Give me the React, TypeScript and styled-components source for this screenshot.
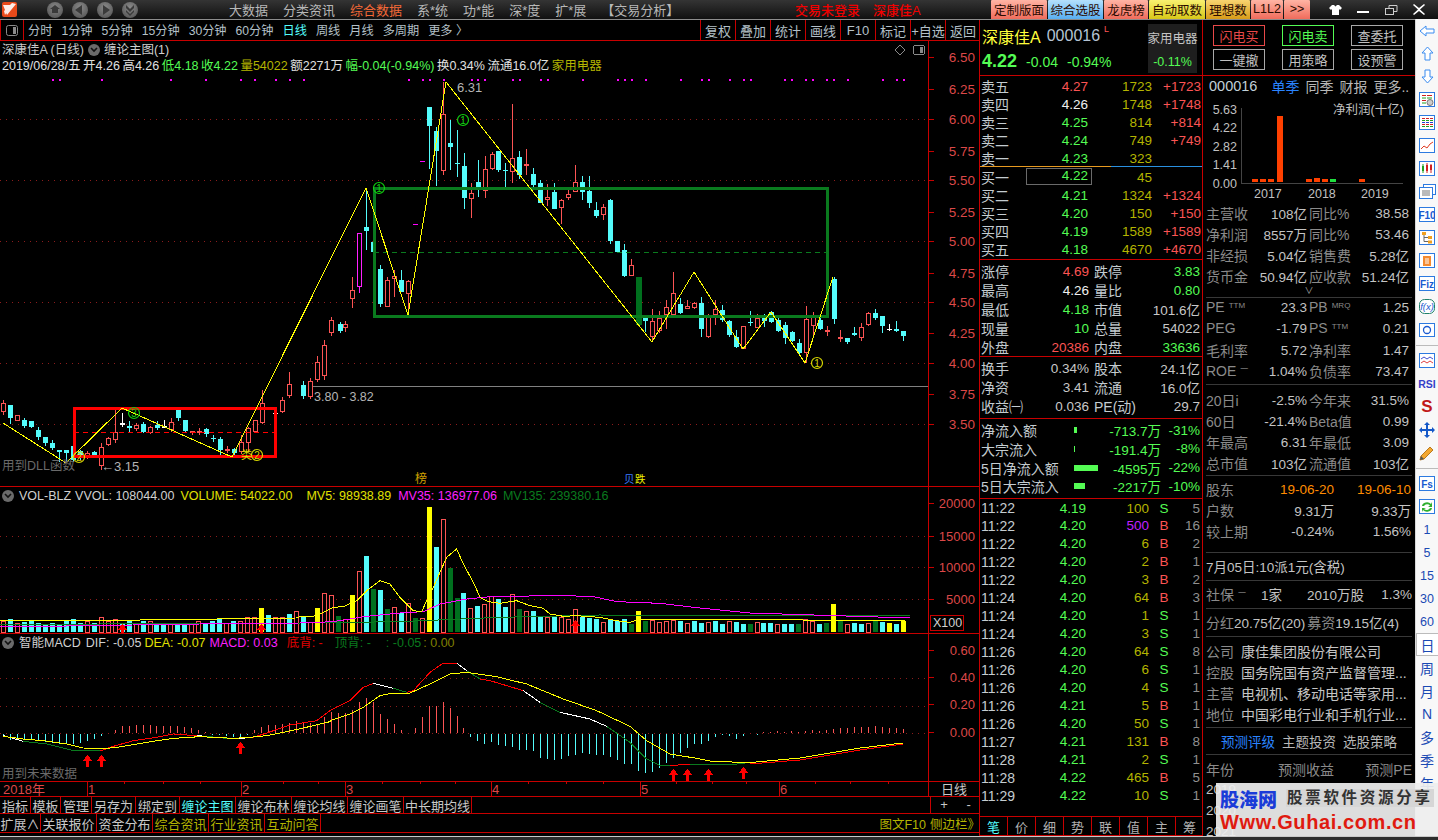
import React from "react";
import styled, { createGlobalStyle } from "styled-components";

const FONT = `"Liberation Sans", "Noto Sans CJK SC", sans-serif`;
const RED = "#c80000";
const CY = "#54fcfc";
const CR = "#fc5454";
const GR = "#54fc54";
const OL = "#b4b400";
const LG = "#c8c8c8";

const Global = createGlobalStyle`
  html, body { margin: 0; padding: 0; background: #000; }
  body { font-family: ${FONT}; font-size: 13px; color: ${LG}; }
  * { box-sizing: border-box; }
`;

const Page = styled.div`
  position: relative; width: 1438px; height: 840px; overflow: hidden;
  background: #000; display: flex; flex-direction: column;
`;

/* ---------- top bar ---------- */
const TopBar = styled.header`
  height: 20px; display: flex; align-items: center; flex: none;
  background: linear-gradient(#343434, #101010);
  border-bottom: 1px solid #8c8c8c;
`;
const Brand = styled.div`
  width: 229px; flex: none; display: flex; align-items: center; padding-left: 2px;
  svg.logo { margin-right: 30px; }
`;
const RoundBtn = styled.span`
  width: 16px; height: 16px; border-radius: 50%; margin-right: 9px;
  background: radial-gradient(circle at 50% 35%, #8a8a8a, #4c4c4c);
  display: flex; align-items: center; justify-content: center;
`;
const Menu = styled.nav`width: 566px; flex: none; display: flex; gap: 15px; font-size: 13px; color: #b8b8b8;`;
const MenuItem = styled.span<{ $active?: boolean }>`
  color: ${(p) => (p.$active ? "#f46a38" : "#b8b8b8")}; white-space: nowrap;
`;
const Status = styled.div`width: 196px; flex: none; display: flex; gap: 13px; color: #f00000; font-size: 13px; font-weight: 500;`;
const Presets = styled.div`width: 329px; flex: none; display: flex; gap: 1px; height: 19px; margin-top: -1px;`;
const Preset = styled.span<{ $w: number; $from: string; $to: string }>`
  width: ${(p) => p.$w}px; display: flex; align-items: center; justify-content: center;
  font-size: 12.5px; color: #2a0a00; white-space: nowrap;
  background: linear-gradient(${(p) => p.$from}, ${(p) => p.$to});
  border-radius: 1px 1px 0 0;
`;
const WinBtns = styled.div`flex: 1; display: flex; align-items: center; justify-content: space-around; padding: 0 6px 0 2px; height: 19px;`;

/* ---------- body columns ---------- */
const Body = styled.main`flex: none; height: 816px; display: flex;`;
const ChartCol = styled.section`width: 980px; flex: none; display: flex; flex-direction: column;`;
const Toolbar = styled.div`
  height: 21px; flex: none; display: flex; align-items: center; border-bottom: 1px solid ${RED};
  border-left: 1px solid ${RED};
`;
const ToggleCell = styled.span`
  width: 23px; height: 100%; flex: none; display: flex; align-items: center; justify-content: center;
  border-right: 1px solid ${RED};
`;
const Periods = styled.div`display: flex; gap: 9px; padding-left: 4px; font-size: 12.2px;`;
const Period = styled.span<{ $on?: boolean }>`color: ${(p) => (p.$on ? CY : "#b4c0c8")}; white-space: nowrap;`;
const ToolBtns = styled.div`margin-left: auto; display: flex; height: 100%;`;
const ToolBtn = styled.span`
  width: 35px; border-left: 1px solid ${RED}; display: flex; align-items: center; justify-content: center;
  font-size: 13px; color: #b4c0c8; white-space: nowrap; overflow: hidden;
`;

const Pane = styled.div<{ $h: number }>`
  position: relative; height: ${(p) => p.$h}px; flex: none; border-bottom: 1px solid ${RED};
  svg.canvas { display: block; }
`;
const PaneHead = styled.div`
  position: absolute; left: 2px; top: 1px; font-size: 12.5px; line-height: 16px; white-space: nowrap;
`;
const HeadLine = styled.div<{ $gap?: number }>`display: flex; align-items: center; gap: ${(p) => p.$gap ?? 4}px;`;
const H = styled.span<{ $c?: string; $ml?: number }>`
  color: ${(p) => p.$c ?? "#d0d0d0"}; margin-left: ${(p) => p.$ml ?? 0}px;
`;
const Chevron = styled.span`
  width: 12px; height: 12px; border-radius: 50%; background: #6a6a6a; flex: none; display: inline-flex;
  align-items: center; justify-content: center;
`;
const TimeRow = styled.div`height: 15px; flex: none; border-bottom: 1px solid ${RED}; position: relative; svg { display: block; }`;
const TabRow = styled.div`height: 17px; flex: none; display: flex; border-bottom: 1px solid ${RED}; position: relative;`;
const TabRow2 = styled(TabRow)`height: 19px;`;
const Tab = styled.span<{ $w: number; $c?: string }>`
  width: ${(p) => p.$w}px; flex: none; display: flex; align-items: center; justify-content: center;
  border-right: 1px solid ${RED}; color: ${(p) => p.$c ?? LG}; font-size: 13px; white-space: nowrap;
`;
const TabRight = styled.div`margin-left: auto; display: flex; align-items: center; gap: 4px; font-size: 12.5px; color: ${OL}; padding-right: 0;`;
const PlusMinus = styled.div`margin-left: auto; width: 50px; display: flex; justify-content: space-around; color: ${LG}; font-size: 13px; border-left: 1px solid ${RED};`;

/* ---------- quote panel ---------- */
const Quote = styled.section`
  width: 224px; flex: none; display: flex; flex-direction: column;
  border-left: 1px solid ${RED}; border-right: 1px solid ${RED}; margin-left: -1px;
`;
const QHead = styled.div`
  height: 56px; flex: none; border-bottom: 1px solid ${RED}; display: flex; justify-content: space-between;
  padding: 4px 5px 2px 2px;
`;
const QName = styled.div`display: flex; flex-direction: column; gap: 3px;`;
const NameLine = styled.div<{ $gap?: number }>`display: flex; align-items: center; gap: ${(p) => p.$gap ?? 6}px; white-space: nowrap;`;
const StockName = styled.span`color: #ffff3c; font-size: 16px;`;
const Code = styled.span`color: #b4c4d4; font-size: 16px;`;
const LMark = styled.span`color: ${CR}; font-size: 9px; align-self: flex-start; margin-left: -2px;`;
const BigPrice = styled.span`color: ${GR}; font-size: 18px; font-weight: bold;`;
const Chg = styled.span`color: ${GR}; font-size: 14px;`;
const Sector = styled.div`
  width: 49px; background: #1e1e1e; display: flex; flex-direction: column; align-items: center; justify-content: space-around;
  font-size: 12.5px; color: #c4c4c4; white-space: nowrap;
`;
const Book = styled.div<{ $bottom?: boolean }>`
  flex: none;
  ${(p) => (p.$bottom ? `border-bottom: 1px solid ${RED}; padding-bottom: 2px;` : "")}
`;
const BookRow = styled.div`
  height: 18px; display: grid; grid-template-columns: 38px 69px 64px 1fr; align-items: center; padding: 0 1px 4px;
  font-size: 13.5px; white-space: nowrap;
`;
const Lbl = styled.span`color: #c4ccd0; font-size: 14px; white-space: nowrap;`;
const Num = styled.span<{ $c?: string; $ml?: number }>`
  color: ${(p) => p.$c ?? LG}; text-align: right; white-space: nowrap; position: relative; margin-left: ${(p) => p.$ml ?? 0}px;
`;
const CurrentPrice = styled(Num)`
  border: 1px solid #6a6a6a; height: 17px; line-height: 14px; margin: 1px -4px 0 7px; padding-right: 3px; align-self: start;
`;
const SplitLine = styled.div`
  height: 1px; flex: none;
  background: linear-gradient(90deg, #e89a20 0, #e89a20 59%, #2a90e0 59%, #2a90e0 100%);
`;
const Stats = styled.div<{ $h: number }>`height: ${(p) => p.$h}px; flex: none; border-bottom: 1px solid ${RED}; padding-top: 1px;`;
const StatRow = styled.div`
  height: 19px; display: grid; grid-template-columns: 36px 72px 41px 1fr; align-items: center; padding: 0 2px 4px 1px;
  font-size: 13.5px; white-space: nowrap;
`;
const Lbl2 = styled(Lbl)`margin-left: 5px;`;
const FlowRow = styled.div`
  height: 18.75px; display: grid; grid-template-columns: 93px 25px 62px 1fr; align-items: center; padding: 0 2px 4px 1px;
  font-size: 13.5px; white-space: nowrap; color: ${GR};
`;
const FlowBar = styled.span`display: block; height: 6px; background: #54fc54;`;
const Trades = styled.div`flex: 1; padding-top: 1px; min-height: 0;`;
const TradeRow = styled.div`
  height: 17.98px; display: grid; grid-template-columns: 52px 53px 63px 24px 1fr; align-items: center; padding: 0 2px 2px 1px;
  font-size: 13.5px; white-space: nowrap;
`;
const QTabs = styled.div`height: 20px; flex: none; display: grid; grid-template-columns: repeat(8, 28px); border-top: 1px solid ${RED}; border-bottom: 1px solid ${RED};`;
const QTab = styled.span<{ $on?: boolean }>`
  display: flex; align-items: center; justify-content: center; font-size: 13px;
  color: ${(p) => (p.$on ? CY : "#b0b0b0")}; border-right: 1px solid ${RED};
`;

/* ---------- finance panel ---------- */
const Fin = styled.section`width: 212px; flex: none; display: flex; flex-direction: column; overflow: hidden; background: #000;`;
const TradeBtns = styled.div`
  height: 56px; flex: none; border-bottom: 1px solid ${RED}; display: grid;
  grid-template-columns: repeat(3, 52px); column-gap: 17px; row-gap: 3px; padding: 5px 0 0 10px; grid-auto-rows: 21px;
`;
const TBtn = styled.span<{ $c: string }>`
  border: 1px solid ${(p) => p.$c}; display: flex; align-items: center; justify-content: center;
  font-size: 13px; color: ${(p) => (p.$c === "#a8a8a8" ? "#c0c0c0" : p.$c)};
`;
const FinTabs = styled.div`height: 22px; flex: none; display: flex; align-items: center; padding: 0 0 2px 6px; gap: 6px; font-size: 14px; color: #b8b8b8; white-space: nowrap;`;
const FinCode = styled.span`color: #c0d0d8; font-size: 14.5px; margin-right: 8px;`;
const FinTab = styled.span<{ $on?: boolean }>`color: ${(p) => (p.$on ? "#2a84ff" : "#b8b8b8")};`;
const Section = styled.div<{ $h: number; $pt?: number; $center?: boolean }>`
  height: ${(p) => p.$h}px; flex: none; margin: 0 3px; padding-top: ${(p) => p.$pt ?? 0}px;
  border-bottom: 1px solid #383838; overflow: hidden;
  ${(p) => (p.$center ? "display:flex;align-items:center;padding-bottom:1px;" : "")}
`;
const LastSection = styled(Section)`border-bottom: none; flex: 1;`;
const FinRow = styled.div`
  height: 21px; display: grid; grid-template-columns: 42px 59px 44px 1fr; align-items: center; padding: 0 3px 3px 0;
  font-size: 13.5px; white-space: nowrap;
`;
const FLbl = styled.span`color: #8a8a8a; font-size: 14px; white-space: nowrap;`;
const FLbl2 = styled(FLbl)`margin-left: 2px;`;
const Sup = styled.span`font-size: 8px; color: #8a8a8a; vertical-align: 4px; margin-left: 4px;`;
const FVal = styled.span<{ $c?: string }>`color: ${(p) => p.$c ?? "#c4c4c4"}; text-align: right; white-space: nowrap;`;
const More = styled.div`height: 10px; text-align: center; color: #aaa; font-size: 9px; line-height: 8px;`;
const HolderRow = styled.div`
  height: 21px; display: grid; grid-template-columns: 42px 86px 77px; align-items: center; padding-bottom: 3px; font-size: 13.5px; white-space: nowrap;
`;
const Plain = styled.span`color: #c4c4c4; font-size: 13.5px; white-space: nowrap;`;
const SocialRow = styled.div`width: 100%; display: grid; grid-template-columns: 42px 34px 82px 1fr; align-items: center; font-size: 13.5px;`;
const InfoRow = styled.div`height: 21px; display: flex; gap: 7px; align-items: center; padding-bottom: 2px; white-space: nowrap;`;
const InfoVal = styled.span`color: #c4c4c4; font-size: 14px; overflow: hidden;`;
const ForecastTabs = styled.div`width: 100%; display: flex; justify-content: center; gap: 7px; font-size: 13.5px; color: #b8b8b8;`;
const ForeRow = styled.div`height: 21px; display: grid; grid-template-columns: 60px 80px 1fr; align-items: center; padding-bottom: 3px; font-size: 13.5px; white-space: nowrap; color: #c4c4c4;`;

/* ---------- icon rail ---------- */
const Rail = styled.aside`width: 23px; flex: none; background: #f8f8f8; display: flex; flex-direction: column; border-left: 1px solid #d8d8d8; margin-top: -1px;`;
const RailCell = styled.span<{ $on?: boolean; $big?: boolean }>`
  height: 23px; flex: none; display: flex; align-items: center; justify-content: center;
  color: #1a4ab4; font-size: ${(p) => (p.$big ? 14 : 12.5)}px;
  ${(p) => (p.$on ? "background:#fff;border:1px solid #bbb;border-right:none;" : "")}
`;
const RailSep = styled.span`height: 8px; flex: none; display: flex; align-items: center; &::after { content: ""; display: block; width: 100%; height: 1px; background: #bbb; }`;
const RsiMark = styled.span`color: #3440c8; font-weight: 800; font-size: 10.5px;`;
const SMark = styled.span`color: #c01818; font-weight: 900; font-size: 17px;`;

const FootBar = styled.div`flex: 1; background: #2c2c2c; border-top: 1px solid #c8c8c8;`;

/* ---------- watermark ---------- */
const Watermark = styled.div`
  position: absolute; left: 1216px; top: 783px; width: 222px; height: 53px;
  background: rgba(238,238,238,.93); padding: 2px 0 0 4px; display: flex; flex-direction: column;
`;
const WmTop = styled.div`display: flex; align-items: center; gap: 9px; height: 26px;`;
const WmBrand = styled.span`color: #1a3cd8; font-weight: 900; font-size: 19px; white-space: nowrap;`;
const WmSlogan = styled.span`
  color: #333; font-family: "Liberation Serif", "Noto Sans CJK SC", serif; font-size: 15.5px; font-weight: bold; letter-spacing: 2.7px;
  white-space: nowrap; background: #d6d6d6; padding: 0 1px; line-height: 18px;
`;
const WmUrl = styled.span`color: #e01a10; font-weight: bold; font-size: 20px; line-height: 22px; white-space: nowrap; letter-spacing: .6px;`;

/* ---------- data ---------- */
type CT = "r" | "c" | "w" | "m" | "g";
type C = [number, number, number, number, number, CT];
const CANDLES: C[] = [
  [3,400,403,412,415,"r"],[10,405,405,418,424,"c"],[17,415,415,421,421,"r"],[24,418,420,426,428,"c"],[31,421,421,427,428,"c"],
  [38,427,430,437,440,"c"],[45,437,437,443,446,"c"],[52,440,443,448,450,"c"],[59,450,450,452,462,"c"],[66,450,450,453,463,"c"],
  [73,446,446,460,462,"c"],[80,450,451,455,460,"c"],[87,451,453,456,459,"r"],[94,451,452,456,458,"c"],[101,443,447,466,470,"r"],
  [108,437,438,445,446,"r"],[115,410,432,440,443,"r"],[122,413,423,425,427,"w"],[129,421,426,428,432,"c"],[136,423,425,429,431,"r"],
  [143,422,424,432,433,"c"],[150,426,427,433,434,"r"],[157,421,425,428,430,"c"],[164,420,426,428,428,"w"],[171,418,422,430,432,"r"],
  [178,410,410,418,421,"c"],[185,420,420,431,432,"c"],[192,431,431,433,435,"r"],[199,428,431,433,435,"r"],[206,428,429,434,437,"c"],
  [213,435,438,439,442,"c"],[220,437,439,450,455,"c"],[227,446,449,451,453,"r"],[234,448,449,453,455,"c"],[241,435,442,452,454,"r"],
  [248,427,428,443,452,"r"],[255,420,420,432,433,"r"],[262,390,403,423,424,"r"],[275,408,413,414,415,"w"],[282,397,400,412,413,"r"],
  [289,372,384,396,398,"r"],[303,381,385,396,399,"c"],[310,378,381,397,399,"r"],[317,356,362,380,382,"r"],[324,340,345,376,380,"r"],
  [331,317,320,333,336,"r"],[340,322,324,331,333,"c"],[345,321,324,328,332,"r"],[352,277,290,299,308,"r"],[359,233,233,287,293,"m"],
  [366,188,227,231,250,"c"],[373,230,242,252,258,"c"],[380,265,269,304,307,"c"],[387,277,280,307,307,"r"],[394,270,276,279,297,"r"],
  [401,270,280,292,292,"c"],[408,280,281,294,315,"r"],[429,107,107,126,169,"c"],[436,127,131,151,186,"c"],[443,82,114,171,175,"r"],
  [450,120,143,147,170,"c"],[457,130,163,164,177,"c"],[464,153,166,198,209,"c"],[471,183,193,199,218,"r"],[478,160,182,189,197,"c"],
  [485,156,169,191,198,"r"],[492,152,154,169,170,"r"],[498,151,151,170,172,"c"],[505,163,170,171,187,"c"],[512,104,158,172,183,"r"],
  [519,151,157,175,179,"c"],[526,149,164,166,175,"r"],[533,168,174,185,187,"c"],[540,180,183,203,203,"c"],[547,184,197,200,206,"r"],
  [554,183,192,209,209,"c"],[561,199,200,208,224,"r"],[568,189,194,198,200,"r"],[575,165,182,192,192,"r"],[582,176,182,192,200,"c"],
  [589,176,191,203,208,"c"],[596,202,210,216,218,"c"],[603,204,207,215,220,"r"],[610,199,200,241,244,"c"],[617,241,241,252,253,"c"],
  [624,244,250,276,277,"c"],[631,259,265,276,276,"r"],[638,277,277,325,325,"g"],[645,317,318,321,332,"c"],[652,309,321,337,342,"r"],
  [659,311,318,331,333,"r"],[666,300,307,315,329,"r"],[673,272,293,315,315,"r"],[680,298,304,313,314,"c"],[687,300,306,309,309,"r"],
  [694,302,303,308,309,"r"],[701,297,303,329,337,"c"],[708,314,317,337,338,"r"],[715,300,309,315,325,"r"],[722,305,310,320,322,"c"],
  [729,320,321,335,337,"c"],[736,330,337,347,348,"c"],[743,326,326,349,349,"r"],[750,311,322,323,326,"c"],[757,314,318,328,328,"r"],
  [764,314,318,321,327,"c"],[771,311,312,322,323,"c"],[778,318,320,331,332,"c"],[785,322,325,338,344,"c"],[792,331,332,341,342,"c"],
  [799,339,343,353,354,"c"],[806,306,319,353,363,"r"],[813,312,317,326,335,"r"],[820,317,320,329,330,"c"],[827,326,330,331,336,"r"],
  [834,277,279,319,324,"c"],[840,330,337,339,342,"r"],[847,338,338,342,344,"c"],[854,327,333,335,336,"c"],[861,323,327,338,341,"r"],
  [868,312,313,325,326,"r"],[875,309,313,318,320,"c"],[882,316,316,326,333,"c"],[889,324,329,330,331,"w"],[896,321,329,331,332,"c"],[903,331,331,336,341,"c"],
];
const MAGENTA_DOTS = [52,59,101,170,205,240,254,275,289,303,408,422,429,443,471,477,484,512,519,540,547,582,617,624,631,645,680,701,708,729,743,750,784,791,805,812,826,833,847,882,896,903];

const VOL = ("r622 c620 r624 c623 c622 c624 c625 c624 c625 c622 c620 c624 r622 c624 r618 r622 r620 c624 c622 r624 c622 r622 c624 c625 r625 c625 c624 r624 r622 c624 c622 c620 r624 c622 r622 r618 r618 y609 c616 r618 r618 c615 r612 " +
  "c618 r623 y609 r594 r596 g617 r620 y596 r572 c557 g590 c591 g610 r608 c614 r604 g619 r619 y508 c548 r520 g569 g599 c594 r609 c607 r605 r597 c600 c608 r595 g610 r612 c612 c618 r618 c618 r618 r620 r610 c618 c619 c620 r623 c620 c622 c620 g625 y612 g622 r621 r623 " +
  "r622 r621 c622 r624 c622 c624 r623 c622 c625 r622 c623 c625 g625 r623 c624 c624 r625 c625 c625 g625 r620 r622 c625 g624 y605 g622 r625 c624 c625 r624 g622 c623 y624 c625 y622").split(" ");
const MACD = [-3,-6,-6,-6,-6,-7,-8,-9,-10,-10,-10,-9,-7,-5,-2,0,3,7,7,8,8,8,7,7,7,7,6,5,3,1,-1,-1,-2,-3,-3,-1,3,6,8,8,9,10,12,11,10,9,16,
  21,20,20,23,31,35,31,19,14,9,3,0,5,16,27,27,31,25,17,5,
  -3,-7,-10,-8,-11,-12,-13,-16,-16,-17,-24,-25,-26,-25,-22,-21,-19,-20,-21,-21,-23,-26,-30,-30,-37,-39,-38,-34,-29,-24,-19,-14,-10,-10,-7,-3,-1,-2,-5,-2,
  0,-1,1,1,2,1,2,1,2,3,2,3,4,5,5,6,6,6,7,6,5,5,4];
const xi = (i: number) => Math.round(3 + i * 6.977);
const zoomPts = (ox: number, oy: number, pts: number[][]) => pts.map(([x, y]) => `${ox + x / 3},${oy + y / 3}`).join(" ");

const MV5 = zoomPts(300, 490, [[0,383],[40,382],[60,375],[100,355],[130,353],[170,335],[200,305],[240,275],[270,285],[300,325],[340,365],[365,368],[380,335],[400,295],[440,205],[470,180],[490,225],[520,280],[540,325],[565,338],[600,343],[650,335],[690,350],[730,358],[750,375],[790,382],[830,380],[900,385],[950,395],[990,400],[1010,393],[1080,390]]);
const MV35 = zoomPts(300, 490, [[0,402],[100,398],[200,382],[300,372],[370,368],[420,345],[500,330],[580,322],[800,320],[880,323],[950,338],[1080,343]]);
const MV135 = zoomPts(300, 490, [[0,402],[300,398],[600,385],[900,378],[1080,380]]);

const DEA_LINE = [
  zoomPts(0, 630, [[10,322],[70,330],[130,335],[200,345],[250,357],[300,360],[350,355],[440,340],[520,328],[600,323],[700,328],[750,325],[800,320],[850,310],[910,297],[990,278]]),
  zoomPts(330, 640, [[0,245],[60,225],[100,205],[150,170],[190,162],[240,162],[300,135],[360,105],[410,100],[500,113],[590,135],[700,180],[800,215],[900,262],[950,305],[1020,345],[1100,358],[1150,368],[1260,370]]),
  "750,763.5 800,759 860,749 903,744",
].join(" ");
const DIF_SEGS: [string, string][] = [
  ["#fff", zoomPts(0,630,[[10,320],[70,337]])],
  ["#0a7a1e", zoomPts(0,630,[[70,337],[140,345],[220,365],[300,366]])],
  ["#f00", zoomPts(0,630,[[300,366],[340,352],[400,335],[470,325],[520,315],[590,320]])],
  ["#fff", zoomPts(0,630,[[590,320],[620,322]])],
  ["#0a7a1e", zoomPts(0,630,[[620,322],[700,330]])],
  ["#fff", zoomPts(0,630,[[700,330],[760,325]])],
  ["#f00", `${760/3},${630+325/3} ${800/3},${630+312/3} ${870/3},${630+288/3} ${950/3},${630+275/3} 330,${630+245/3} ` + zoomPts(330,640,[[0,215],[60,185],[100,145],[130,133]])],
  ["#fff", zoomPts(330,640,[[130,133],[190,148]])],
  ["#0a7a1e", zoomPts(330,640,[[190,148],[230,160]])],
  ["#f00", zoomPts(330,640,[[230,160],[250,155],[300,100],[340,72],[380,72]])],
  ["#fff", zoomPts(330,640,[[380,72],[410,95]])],
  ["#0a7a1e", zoomPts(330,640,[[410,95],[450,120]])],
  ["#f00", zoomPts(330,640,[[450,120],[480,125],[580,155]])],
  ["#fff", zoomPts(330,640,[[580,155],[630,190]])],
  ["#0a7a1e", zoomPts(330,640,[[630,190],[690,220]])],
  ["#fff", zoomPts(330,640,[[690,220],[780,240],[830,262]])],
  ["#0a7a1e", zoomPts(330,640,[[830,262],[900,310],[950,360],[990,380],[1020,380]])],
  ["#f00", zoomPts(330,640,[[1020,380],[1080,375]])],
  ["#0a7a1e", zoomPts(330,640,[[1080,375],[1140,375],[1220,375],[1260,370]])],
  ["#f00", "750,765 800,761 860,751 903,745"],
];

const Axis = ({ ticks, small }: { ticks: [string, number][]; small?: boolean }) => (
  <>
    <rect x={928} y={0} width={1} height={840} fill={RED} />
    {ticks.map(([t, y]) => (
      <g key={t}>
        <rect x={929} y={y} width={5} height={1} fill={RED} />
        <text x={975} y={y + 5} textAnchor="end" fontSize={small ? 13 : 13.5} fill="#dc4848">{t}</text>
      </g>
    ))}
  </>
);
const Dotted = ({ ys }: { ys: number[] }) => (
  <>{ys.map((y) => <line key={y} x1={0} x2={928} y1={y + .5} y2={y + .5} stroke="#8c1c1c" strokeDasharray="1 5" />)}</>
);
const Mark = ({ x, y, n, c }: { x: number; y: number; n: string; c: string }) => (
  <g shapeRendering="auto">
    <circle cx={x} cy={y} r={5.5} fill="none" stroke={c} strokeWidth={1.2} />
    <text x={x} y={y + 3.5} textAnchor="middle" fontSize={10} fill={c}>{n}</text>
  </g>
);
const UpArrow = ({ x, y }: { x: number; y: number }) => (
  <path d={`M${x + .5} ${y}L${x + 5.5} ${y + 6}H${x + 2}V${y + 12}H${x - 1}V${y + 6}H${x - 4.5}Z`} fill="#ff0000" />
);
const Candle = ({ c }: { c: C }) => {
  const [x, hi, top, bot, lo, t] = c;
  const col = t === "r" ? CR : t === "c" ? CY : t === "m" ? "#ff20ff" : t === "w" ? "#fff" : "#00701e";
  if (t === "g") return <rect x={x - 2} y={top} width={6} height={bot - top} fill={col} />;
  const hollow = t === "r" || t === "m";
  return (
    <g>
      {hi < top && <rect x={x} y={hi} width={1} height={top - hi} fill={col} />}
      {lo > bot && <rect x={x} y={bot} width={1} height={lo - bot} fill={col} />}
      {hollow
        ? <rect x={x - 1.5} y={top + .5} width={4} height={Math.max(1, bot - top - 1)} fill="#000" stroke={col} />
        : <rect x={x - 2} y={top} width={5} height={Math.max(1, bot - top)} fill={col} />}
    </g>
  );
};

const ChevronIcon = () => (
  <svg width="8" height="6" viewBox="0 0 8 6"><path d="M1 1l3 3 3-3" fill="none" stroke="#111" strokeWidth="1.6" /></svg>
);

const Toggle = ({ color = "#8a8a8a" }: { color?: string }) => (
  <svg width="12" height="11" viewBox="0 0 12 11"><rect x=".5" y=".5" width="11" height="10" rx="2" fill="none" stroke={color} /><rect x="7" y="2" width="3" height="7" fill={color} /></svg>
);

const MainChart = () => (
  <svg className="canvas" width={980} height={445} viewBox="0 41 980 445" shapeRendering="crispEdges" fontFamily={FONT}>
    <Dotted ys={[119, 180, 241, 302, 363, 424]} />
    <Axis ticks={[["6.50",57],["6.25",89],["6.00",119],["5.75",151],["5.50",180],["5.25",212],["5.00",241],["4.75",273],["4.50",302],["4.25",333],["4.00",363],["3.75",394],["3.50",424]]} />
    <rect x={310} y={386} width={618} height={1} fill="#808080" />
    {MAGENTA_DOTS.map((x) => <rect key={x} x={x} y={79} width={2} height={2} fill="#ff00ff" />)}
    <rect x={420} y={161} width={5} height={1} fill="#ff00ff" />
    <rect x={413} y={224} width={5} height={1} fill="#ff00ff" />
    {CANDLES.map((c) => <Candle key={c[0]} c={c} />)}
    <line x1={74} x2={275} y1={432.5} y2={432.5} stroke="#f00" strokeDasharray="5 4" />
    <rect x={74} y={408.5} width={201} height={48} fill="none" stroke="#f00" strokeWidth={3} />
    <line x1={374} x2={827} y1={252.5} y2={252.5} stroke="#0a7a1e" strokeDasharray="5 4" />
    <rect x={374} y={188} width={453} height={128} fill="none" stroke="#0a7a1e" strokeWidth={3} />
    <polyline fill="none" stroke="#ffff00" points="3,423 66,463 122,408 232,457 366,188 408,315 446,82 652,342 694,272 743,349 771,312 805,363 833,277" />
    <Mark x={379} y={188} n="1" c="#10d010" />
    <Mark x={463} y={120} n="1" c="#10d010" />
    <Mark x={134} y={413} n="3" c="#10d010" />
    <Mark x={817} y={363} n="1" c="#d8d800" />
    <Mark x={257} y={455} n="2" c="#d8d800" />
    <Mark x={79} y={457} n="2" c="#d8d800" />
    <g shapeRendering="auto">
      <text x={241} y={459} fontSize={11} fill="#e0e000">类</text>
      <text x={457} y={92} fontSize={13} fill="#b4b4b4">6.31</text>
      <text x={101} y={471} fontSize={13} fill="#b4b4b4">←3.15</text>
      <text x={314} y={401} fontSize={12.5} fill="#b4b4b4">3.80 - 3.82</text>
      <text x={2} y={470} fontSize={12.5} fill="#6a6a6a">用到DLL函数</text>
      <text x={415} y={483} fontSize={12} fill="#d0a000">榜</text>
      <text x={624} y={483} fontSize={10.5} fill="#3a7cff">贝</text>
      <text x={635} y={483} fontSize={10.5} fill="#f0f000">跌</text>
    </g>
    <path d="M900 45l5 5-5 5-5-5z" fill="none" stroke="#8a8a8a" />
    <g transform="translate(913 45)"><rect x=".5" y=".5" width="11" height="9" rx="2" fill="none" stroke="#8a8a8a" /><rect x="7" y="2" width="3" height="6" fill="#8a8a8a" /></g>
  </svg>
);

const VolChart = () => (
  <svg className="canvas" width={980} height={146} viewBox="0 488 980 146" shapeRendering="crispEdges" fontFamily={FONT}>
    <Dotted ys={[537, 568, 600]} />
    <Axis ticks={[["20000",504],["15000",537],["10000",568],["5000",600]]} small />
    {VOL.map((v, i) => {
      const t = v[0]; const top = +v.slice(1); const x = xi(i); const h = 633 - top;
      if (t === "r") return <rect key={i} x={x - 1.5} y={top + .5} width={4} height={h} fill="#000" stroke={CR} />;
      return <rect key={i} x={x - 2} y={top} width={5} height={h} fill={t === "c" ? CY : t === "y" ? "#ffff00" : "#00701e"} />;
    })}
    <polyline fill="none" stroke="#0a7a1e" points={`0,626 100,625 ${MV135} 910,617`} />
    <polyline fill="none" stroke="#ff00ff" points={`0,628 200,625 ${MV35} 700,609 750,614 910,619`} />
    <polyline fill="none" stroke="#ffff00" points={`0,622 140,621 296,619 ${MV5} 700,620 905,622`} />
    <UpArrow x={575} y={621} />
    <UpArrow x={122} y={625} />
    <UpArrow x={261} y={625} />
    <rect x={930.5} y={616.5} width={33} height={15} fill="#000" stroke={RED} />
    <text x={933} y={628} fontSize={12.5} fill="#d0d0d0" shapeRendering="auto">X100</text>
  </svg>
);

const MacdChart = () => (
  <svg className="canvas" width={980} height={147} viewBox="0 635 980 147" shapeRendering="crispEdges" fontFamily={FONT}>
    <Dotted ys={[679, 707, 734]} />
    <Axis ticks={[["0.60",651],["0.40",678],["0.20",705],["0.00",733]]} small />
    {MACD.map((h, i) => (
      <rect key={i} x={xi(i)} y={h > 0 ? 734 - h : 735} width={1} height={Math.abs(h)} fill={h > 0 ? CR : CY} />
    ))}
    {DIF_SEGS.map(([c, p], i) => <polyline key={i} fill="none" stroke={c} points={p} />)}
    <polyline fill="none" stroke="#ffff00" points={DEA_LINE} />
    {[[87,756],[101,756],[240,743],[673,770],[687,770],[708,770],[743,768]].map(([x, y]) => <UpArrow key={x} x={x} y={y} />)}
    <text x={2} y={779} fontSize={12.5} fill="#6a6a6a" shapeRendering="auto">用到未来数据</text>
  </svg>
);

const TimeAxis = () => (
  <svg width={980} height={14} viewBox="0 784 980 14" shapeRendering="crispEdges" fontFamily={FONT}>
    {[87,241,345,491,640,779].map((x) => <rect key={x} x={x} y={784} width={1} height={14} fill={RED} />)}
    {[124,163,200,283,318,382,420,455,528,566,603,676,712,746,815,850,888].map((x) => <rect key={x} x={x} y={784} width={1} height={2} fill={RED} />)}
    <rect x={928} y={784} width={1} height={14} fill={RED} />
    <g shapeRendering="auto" fontSize={13} fill="#dc4848">
      <text x={3} y={796}>2018年</text>
      <text x={88} y={796}>1</text><text x={242} y={796}>2</text><text x={346} y={796}>3</text>
      <text x={492} y={796}>4</text><text x={641} y={796}>5</text><text x={780} y={796}>6</text>
      <text x={941} y={796} fill="#c8c8c8">日线</text>
    </g>
  </svg>
);

const BOOK_SELL = [["卖五","4.27",CR,"1723","+1723"],["卖四","4.26","#f0f0f0","1748","+1748"],["卖三","4.25",GR,"814","+814"],["卖二","4.24",GR,"749","+749"],["卖一","4.23",GR,"323",""]];
const BOOK_BUY = [["买一","4.22",GR,"45",""],["买二","4.21",GR,"1324","+1324"],["买三","4.20",GR,"150","+150"],["买四","4.19",GR,"1589","+1589"],["买五","4.18",GR,"4670","+4670"]];
const TRADES: [string,string,string,string,string][] = [
  ["11:22","4.19","100","S","5"],["11:22","4.20","500","B","16"],["11:22","4.20","6","B","2"],["11:22","4.20","2","B","1"],["11:22","4.20","3","B","2"],
  ["11:24","4.20","64","B","3"],["11:24","4.20","1","S","1"],["11:24","4.20","3","S","1"],["11:26","4.20","64","S","8"],["11:26","4.20","6","S","1"],
  ["11:26","4.20","4","S","1"],["11:26","4.21","5","B","1"],["11:26","4.20","50","S","1"],["11:27","4.21","131","B","8"],["11:28","4.21","2","S","1"],
  ["11:28","4.22","465","B","5"],["11:29","4.22","10","S","1"],
];

const Frame = ({ children, w = 16, h = 15 }: { children: React.ReactNode; w?: number; h?: number }) => (
  <svg width={w} height={h} viewBox={`0 0 ${w} ${h}`} fontFamily={FONT}>
    <rect x=".5" y=".5" width={w - 1} height={h - 1} fill="#fff" stroke="#2c7ae0" />
    {children}
  </svg>
);
const RailIcons: React.ReactNode[] = [
  <svg width="16" height="12" viewBox="0 0 16 12"><path d="M1 6l6-5v3h8v4H7v3z" fill="#fff" stroke="#3a8cf0" /></svg>,
  <svg width="13" height="15" viewBox="0 0 13 15"><path d="M6.5 1l5.5 6H9v7H4V7H1z" fill="#fff" stroke="#3a8cf0" /></svg>,
  <svg width="13" height="15" viewBox="0 0 13 15"><path d="M6.5 14l5.5-6H9V1H4v7H1z" fill="#fff" stroke="#3a8cf0" /></svg>,
  <Frame><path d="M3 3.5h4M8 3.5h5" stroke="#d02020" /><path d="M3 6h4M8 6h5" stroke="#20a020" /><path d="M3 8.5h4" stroke="#d02020" /><path d="M3 11h4" stroke="#20a020" /><circle cx="11" cy="10.5" r="3" fill="#ccc" stroke="#777" /></Frame>,
  <Frame><path d="M3 3.5h3M7 3.5h3M11 3.5h3" stroke="#d02020" /><path d="M3 5.5h3M7 5.5h3M11 5.5h3" stroke="#20a020" /><path d="M3 7.5h3M7 7.5h3M11 7.5h3" stroke="#2040d0" /><path d="M3 9.5h3M7 9.5h3M11 9.5h3" stroke="#d02020" /><path d="M3 11.5h3M7 11.5h3M11 11.5h3" stroke="#20a020" /></Frame>,
  <Frame><path d="M2 11l3-3 3 2 3-4 3-2" fill="none" stroke="#e03a20" /></Frame>,
  <Frame><path d="M4 3v9" stroke="#20a020" /><rect x="3" y="5" width="2" height="5" fill="#20a020" /><path d="M8 2v10" stroke="#d02020" /><rect x="7" y="4" width="2" height="6" fill="#d02020" /><path d="M12 3v9" stroke="#d02020" /><rect x="11" y="4" width="2" height="5" fill="#d02020" /></Frame>,
  <svg width="17" height="15" viewBox="0 0 17 15"><rect x="4.5" y=".5" width="12" height="10" fill="#fff" stroke="#2c7ae0" /><rect x=".5" y="3.5" width="13" height="11" fill="#fff" stroke="#2c7ae0" /><path d="M3 7h8M3 9h8M3 11h8" stroke="#777" /></svg>,
  <Frame><text x="8" y="11.5" textAnchor="middle" fontSize="10" fill="#1a5ad0" fontWeight="bold">F10</text></Frame>,
  <Frame><rect x="3" y="2" width="4" height="3" fill="#f0a020" /><rect x="9" y="6" width="4" height="3" fill="#f0a020" /><rect x="9" y="10.5" width="4" height="3" fill="#f0a020" /><path d="M5 5v6.5h4M5 7.5h4" fill="none" stroke="#666" /></Frame>,
  <Frame><path d="M4 3h8v10H4z" fill="#f48a30" /><path d="M6 6h4M6 8h4M6 10h4" stroke="#fff" /></Frame>,
  <Frame><text x="8" y="11.5" textAnchor="middle" fontSize="10" fill="#1a5ad0" fontWeight="bold">Fiz</text></Frame>,
  <svg width="16" height="15" viewBox="0 0 16 15" fontFamily={FONT}><rect x=".5" y=".5" width="15" height="14" rx="5" fill="#fff" stroke="#20806a" /><text x="8" y="11" textAnchor="middle" fontSize="9.5" fontStyle="italic" fill="#1a5ad0">f(x)</text></svg>,
  <Frame w={16} h={14}><circle cx="8" cy="7" r="3.5" fill="none" stroke="#1a5ad0" strokeWidth="1.3" /></Frame>,
];
const RailIcons2: React.ReactNode[] = [
  <Frame><path d="M2 6l3-2 3 2 3-2 3 2" fill="none" stroke="#4050d0" /><path d="M2 10l3-2 3 2 3-2 3 2" fill="none" stroke="#e04040" /></Frame>,
  <RsiMark>RSI</RsiMark>,
  <SMark>S</SMark>,
  <svg width="16" height="16" viewBox="0 0 16 16"><path d="M8 0l3 3H9v4h4V5l3 3-3 3V9H9v4h2l-3 3-3-3h2V9H3v2L0 8l3-3v2h4V3H5z" fill="#1458c8" /></svg>,
  <svg width="16" height="16" viewBox="0 0 16 16"><path d="M2 11L11 2l3 3-9 9-4 1z" fill="#f4a830" stroke="#b87a20" /><path d="M1 15l1-4 3 3z" fill="#555" /></svg>,
];
const RailIcons3: React.ReactNode[] = [
  <Frame><text x="8" y="11.5" textAnchor="middle" fontSize="10" fill="#1a5ad0" fontWeight="bold">Fs</text></Frame>,
  <Frame><path d="M3 7a5 4 0 0 1 9-2l1-2v5H9l2-1.5A3.5 3 0 0 0 5 7z" fill="#30b030" /><path d="M13 9a5 4 0 0 1-9 2l-1 2V9h4l-2 1a3.500 3 0 0 0 6-1z" fill="#30b030" /></Frame>,
  "1","5","15","30","60",
];
const RailLetters = ["周","月","N","多","季","年"];

export default function App() {
  return (
    <Page>
      <Global />
      <TopBar>
        <Brand>
          <svg className="logo" width="15" height="15" viewBox="0 0 15 15"><rect width="15" height="15" rx="2" fill="#e84a1a" /><path d="M1 3h8L3 13l-1-4 8-8 4 1-9 11" fill="#fff" opacity=".9" /></svg>
          {["M8 3l5 4h-2v4H5V7H3z","M10 3v10L3 8z","M6 3v10l7-5z","M4 3l4 4 4-4v3l-4 4-4-4zM4 8l4 4 4-4v2l-4 4-4-4z"].map((d) => (
            <RoundBtn key={d}><svg width="16" height="16" viewBox="0 0 16 16"><path d={d} fill="#3a3a3a" /></svg></RoundBtn>
          ))}
        </Brand>
        <Menu>
          {["大数据","分类资讯","综合数据","系*统","功*能","深*度","扩*展","【交易分析】"].map((m) => <MenuItem key={m} $active={m === "综合数据"}>{m}</MenuItem>)}
        </Menu>
        <Status><span>交易未登录</span><span>深康佳A</span></Status>
        <Presets>
          <Preset $w={56} $from="#ffb4a4" $to="#f06c5c">定制版面</Preset>
          <Preset $w={55} $from="#b4e0fc" $to="#58aef0">综合选股</Preset>
          <Preset $w={44} $from="#ffb4a4" $to="#f06c5c">龙虎榜</Preset>
          <Preset $w={56} $from="#f8f070" $to="#d8c818">自动取数</Preset>
          <Preset $w={44} $from="#f8d470" $to="#d89c18">理想数</Preset>
          <Preset $w={32} $from="#ffb4a4" $to="#f06c5c">L1L2</Preset>
          <Preset $w={26} $from="#ffb4a4" $to="#f06c5c">&gt;&gt;</Preset>
        </Presets>
        <WinBtns>
          <svg width="13" height="10" viewBox="0 0 13 10"><path d="M3 0h2l1.500 1.500L8 0h2l3 3-2 2-1-1v6H3V4L2 5 0 3z" fill="#fff" /></svg>
          <svg width="13" height="10" viewBox="0 0 13 10"><rect y="6" width="12" height="2" fill="#fff" /></svg>
          <svg width="13" height="10" viewBox="0 0 13 10" fill="none" stroke="#ccc"><rect x=".5" y="3.500" width="8" height="6" /><path d="M4 3V.5h8v6H9" /></svg>
          <svg width="12" height="11" viewBox="0 0 12 11"><path d="M1 0l5 4 5-4 1 1-5 4.500 5 4.500-1 1-5-4-5 4-1-1 5-4.500L0 1z" fill="#fff" /></svg>
        </WinBtns>
      </TopBar>
      <Body>
        <ChartCol>
          <Toolbar>
            <ToggleCell><Toggle /></ToggleCell>
            <Periods>
              {["分时","1分钟","5分钟","15分钟","30分钟","60分钟"].map((p) => <Period key={p}>{p}</Period>)}
              <Period $on>日线</Period>
              {["周线","月线","多周期","更多 〉"].map((p) => <Period key={p}>{p}</Period>)}
            </Periods>
            <ToolBtns>
              {["复权","叠加","统计","画线","F10","标记","+自选","返回"].map((b) => <ToolBtn key={b}>{b}</ToolBtn>)}
            </ToolBtns>
          </Toolbar>
          <Pane $h={446}>
            <MainChart />
            <PaneHead>
              <HeadLine>
                <H $c="#c8c8c8">深康佳A (日线)</H><Chevron><ChevronIcon /></Chevron><H>缠论主图(1)</H>
              </HeadLine>
              <HeadLine $gap={2.5}>
                <H $c="#e0e0e0">2019/06/28/五</H><H $c="#e0e0e0">开4.26</H><H $c="#e0e0e0">高4.26</H><H $c={GR}>低4.18</H><H $c={GR}>收4.22</H>
                <H $c={OL}>量54022</H><H $c="#e0e0e0">额2271万</H><H $c={GR}>幅-0.04(-0.94%)</H><H $c="#e0e0e0">换0.34%</H><H $c="#e0e0e0">流通16.0亿</H><H $c={OL}>家用电器</H>
              </HeadLine>
            </PaneHead>
          </Pane>
          <Pane $h={147}>
            <VolChart />
            <PaneHead>
              <HeadLine $gap={5}>
                <Chevron><ChevronIcon /></Chevron>
                <H>VOL-BLZ</H><H $ml={-1}>VVOL: 108044.00</H>
                <H $c="#e0e000" $ml={1}>VOLUME: 54022.00</H><H $c="#e0e000" $ml={9}>MV5: 98938.89</H>
                <H $c="#ff20ff" $ml={2}>MV35: 136977.06</H><H $c="#0a7a1e" $ml={1}>MV135: 239380.16</H>
              </HeadLine>
            </PaneHead>
          </Pane>
          <Pane $h={148}>
            <MacdChart />
            <PaneHead>
              <HeadLine $gap={5}>
                <Chevron><ChevronIcon /></Chevron>
                <H>智能MACD</H><H>DIF: -0.05</H><H $c="#e0e000" $ml={-2}>DEA: -0.07</H><H $c="#ff20ff" $ml={-1}>MACD: 0.03</H>
                <H $c="#e00000" $ml={4}>底背: -</H><H $c="#0a7a1e" $ml={7}>顶背: -</H><H $c="#0a7a1e" $ml={10}>: -0.05</H><H $c="#808000" $ml={-3}>: 0.00</H>
              </HeadLine>
            </PaneHead>
          </Pane>
          <TimeRow><TimeAxis /></TimeRow>
          <TabRow>
            <Tab $w={31}>指标</Tab><Tab $w={30}>模板</Tab><Tab $w={31}>管理</Tab><Tab $w={44}>另存为</Tab><Tab $w={44}>绑定到</Tab>
            <Tab $w={56} $c={CY}>缠论主图</Tab><Tab $w={56}>缠论布林</Tab><Tab $w={56}>缠论均线</Tab><Tab $w={56}>缠论画笔</Tab><Tab $w={68}>中长期均线</Tab>
            <PlusMinus><span>+</span><span>-</span></PlusMinus>
          </TabRow>
          <TabRow2>
            <Tab $w={41}>扩展∧</Tab><Tab $w={56}>关联报价</Tab><Tab $w={56}>资金分布</Tab>
            <Tab $w={56} $c={OL}>综合资讯</Tab><Tab $w={56} $c={OL}>行业资讯</Tab><Tab $w={56} $c={OL}>互动问答</Tab>
            <TabRight><span>图文F10</span><span>侧边栏》</span></TabRight>
          </TabRow2>
        </ChartCol>

        <Quote>
          <QHead>
            <QName>
              <NameLine><StockName>深康佳A</StockName><Code>000016</Code><LMark>L</LMark></NameLine>
              <NameLine $gap={9}><BigPrice>4.22</BigPrice><Chg>-0.04</Chg><Chg>-0.94%</Chg></NameLine>
            </QName>
            <Sector><span>家用电器</span><span style={{ color: GR }}>-0.11%</span></Sector>
          </QHead>
          <Book>
            {BOOK_SELL.map(([l, p, c, v, d]) => (
              <BookRow key={l}><Lbl>{l}</Lbl><Num $c={c}>{p}</Num><Num $c={OL}>{v}</Num><Num $c={CR}>{d}</Num></BookRow>
            ))}
          </Book>
          <SplitLine />
          <Book $bottom>
            {BOOK_BUY.map(([l, p, c, v, d], i) => (
              <BookRow key={l}><Lbl>{l}</Lbl>{i === 0 ? <CurrentPrice $c={c}>{p}</CurrentPrice> : <Num $c={c}>{p}</Num>}<Num $c={OL}>{v}</Num><Num $c={CR}>{d}</Num></BookRow>
            ))}
          </Book>
          <Stats $h={97}>
            <StatRow><Lbl>涨停</Lbl><Num $c={CR}>4.69</Num><Lbl2>跌停</Lbl2><Num $c={GR}>3.83</Num></StatRow>
            <StatRow><Lbl>最高</Lbl><Num $c="#f0f0f0">4.26</Num><Lbl2>量比</Lbl2><Num $c={GR}>0.80</Num></StatRow>
            <StatRow><Lbl>最低</Lbl><Num $c={GR}>4.18</Num><Lbl2>市值</Lbl2><Num>101.6亿</Num></StatRow>
            <StatRow><Lbl>现量</Lbl><Num $c={GR}>10</Num><Lbl2>总量</Lbl2><Num>54022</Num></StatRow>
            <StatRow><Lbl>外盘</Lbl><Num $c={CR}>20386</Num><Lbl2>内盘</Lbl2><Num $c={GR}>33636</Num></StatRow>
          </Stats>
          <Stats $h={62}>
            <StatRow><Lbl>换手</Lbl><Num>0.34%</Num><Lbl2>股本</Lbl2><Num>24.1亿</Num></StatRow>
            <StatRow><Lbl>净资</Lbl><Num>3.41</Num><Lbl2>流通</Lbl2><Num>16.0亿</Num></StatRow>
            <StatRow><Lbl>收益㈠</Lbl><Num>0.036</Num><Lbl2>PE(动)</Lbl2><Num>29.7</Num></StatRow>
          </Stats>
          <Stats $h={80}>
            <FlowRow><Lbl>净流入额</Lbl><FlowBar style={{ width: 3 }} /><Num $c={GR}>-713.7万</Num><Num $c={GR}>-31%</Num></FlowRow>
            <FlowRow><Lbl>大宗流入</Lbl><FlowBar style={{ width: 1 }} /><Num $c={GR}>-191.4万</Num><Num $c={GR}>-8%</Num></FlowRow>
            <FlowRow><Lbl>5日净流入额</Lbl><FlowBar style={{ width: 24 }} /><Num $c={GR}>-4595万</Num><Num $c={GR}>-22%</Num></FlowRow>
            <FlowRow><Lbl>5日大宗流入</Lbl><FlowBar style={{ width: 11 }} /><Num $c={GR}>-2217万</Num><Num $c={GR}>-10%</Num></FlowRow>
          </Stats>
          <Trades>
            {TRADES.map(([t, p, v, s, n], i) => (
              <TradeRow key={i}>
                <Lbl>{t}</Lbl>
                <Num $c={GR}>{p}</Num>
                <Num $c={v === "500" ? "#c020ff" : OL}>{v}</Num>
                <Num $c={s === "S" ? GR : CR} style={{ textAlign: "center", paddingLeft: 6 }}>{s}</Num>
                <Num $c="#909090">{n}</Num>
              </TradeRow>
            ))}
          </Trades>
          <QTabs>
            {["笔","价","细","势","联","值","主","筹"].map((t, i) => <QTab key={t} $on={i === 0}>{t}</QTab>)}
          </QTabs>
        </Quote>

        <Fin>
          <TradeBtns>
            <TBtn $c="#e84848">闪电买</TBtn><TBtn $c="#54fc54">闪电卖</TBtn><TBtn $c="#a8a8a8">查委托</TBtn>
            <TBtn $c="#a8a8a8">一键撤</TBtn><TBtn $c="#a8a8a8">用策略</TBtn><TBtn $c="#a8a8a8">设预警</TBtn>
          </TradeBtns>
          <FinTabs>
            <FinCode>000016</FinCode><FinTab $on>单季</FinTab><FinTab>同季</FinTab><FinTab>财报</FinTab><FinTab>更多..</FinTab>
          </FinTabs>
          <svg width={212} height={105} viewBox="1204 98 212 105" fontFamily={FONT} style={{ flex: "none", display: "block" }}>
            {[["5.63",114],["4.22",132],["2.82",151],["1.41",169],["0.00",188]].map(([t, y]) => (
              <text key={t} x={1238} y={y} textAnchor="end" fontSize={12.5} fill="#c0c0c0">{t}</text>
            ))}
            <text x={1334} y={114} fontSize={12.5} fill="#c0c0c0">净利润(十亿)</text>
            <g shapeRendering="crispEdges">
              <rect x={1242} y={108} width={1} height={76} fill="#444" />
              <rect x={1242} y={183} width={162} height={1} fill="#444" />
              {[[1253,3],[1261,3],[1269,3],[1278,66],[1307,3],[1315,4],[1323,3],[1360,3]].map(([x, h]) => <rect key={x} x={x} y={182 - h} width={6} height={h} fill="#ff4000" />)}
              <rect x={1331} y={179} width={6} height={3} fill="#20e040" />
            </g>
            {[["2017",1255],["2018",1309],["2019",1362]].map(([t, x]) => <text key={t} x={x} y={198} fontSize={12.5} fill="#c0c0c0">{t}</text>)}
          </svg>
          <Section $h={95}>
            <FinRow><FLbl>主营收</FLbl><FVal>108亿</FVal><FLbl2>同比%</FLbl2><FVal>38.58</FVal></FinRow>
            <FinRow><FLbl>净利润</FLbl><FVal>8557万</FVal><FLbl2>同比%</FLbl2><FVal>53.46</FVal></FinRow>
            <FinRow><FLbl>非经损</FLbl><FVal>5.04亿</FVal><FLbl2>销售费</FLbl2><FVal>5.28亿</FVal></FinRow>
            <FinRow><FLbl>货币金</FLbl><FVal>50.94亿</FVal><FLbl2>应收款</FLbl2><FVal>51.24亿</FVal></FinRow>
            <More>∨</More>
          </Section>
          <Section $h={87}>
            <FinRow><FLbl>PE<Sup>TTM</Sup></FLbl><FVal>23.3</FVal><FLbl2>PB<Sup>MRQ</Sup></FLbl2><FVal>1.25</FVal></FinRow>
            <FinRow><FLbl>PEG</FLbl><FVal>-1.79</FVal><FLbl2>PS<Sup>TTM</Sup></FLbl2><FVal>0.21</FVal></FinRow>
            <FinRow><FLbl>毛利率</FLbl><FVal>5.72</FVal><FLbl2>净利率</FLbl2><FVal>1.47</FVal></FinRow>
            <FinRow><FLbl>ROE<Sup>一</Sup></FLbl><FVal>1.04%</FVal><FLbl2>负债率</FLbl2><FVal>73.47</FVal></FinRow>
          </Section>
          <Section $h={91} $pt={5}>
            <FinRow><FLbl>20日i</FLbl><FVal>-2.5%</FVal><FLbl2>今年来</FLbl2><FVal>31.5%</FVal></FinRow>
            <FinRow><FLbl>60日</FLbl><FVal>-21.4%</FVal><FLbl2>Beta值</FLbl2><FVal>0.99</FVal></FinRow>
            <FinRow><FLbl>年最高</FLbl><FVal>6.31</FVal><FLbl2>年最低</FLbl2><FVal>3.09</FVal></FinRow>
            <FinRow><FLbl>总市值</FLbl><FVal>103亿</FVal><FLbl2>流通值</FLbl2><FVal>103亿</FVal></FinRow>
          </Section>
          <Section $h={77} $pt={3}>
            <HolderRow><FLbl>股东</FLbl><FVal $c="#ff8c00">19-06-20</FVal><FVal $c="#ff8c00">19-06-10</FVal></HolderRow>
            <HolderRow><FLbl>户数</FLbl><FVal>9.31万</FVal><FVal>9.33万</FVal></HolderRow>
            <HolderRow><FLbl>较上期</FLbl><FVal>-0.24%</FVal><FVal>1.56%</FVal></HolderRow>
          </Section>
          <Section $h={28} $center><Plain>7月05日:10派1元(含税)</Plain></Section>
          <Section $h={28} $center>
            <SocialRow><FLbl>社保<Sup>一</Sup></FLbl><FVal>1家</FVal><FVal>2010万股</FVal><FVal>1.3%</FVal></SocialRow>
          </Section>
          <Section $h={28} $center><FLbl>分红</FLbl><Plain>20.75亿(20)</Plain><FLbl2>募资</FLbl2><Plain>19.15亿(4)</Plain></Section>
          <Section $h={91} $pt={4}>
            <InfoRow><FLbl>公司</FLbl><InfoVal>康佳集团股份有限公司</InfoVal></InfoRow>
            <InfoRow><FLbl>控股</FLbl><InfoVal>国务院国有资产监督管理...</InfoVal></InfoRow>
            <InfoRow><FLbl>主营</FLbl><InfoVal>电视机、移动电话等家用...</InfoVal></InfoRow>
            <InfoRow><FLbl>地位</FLbl><InfoVal>中国彩电行业和手机行业...</InfoVal></InfoRow>
          </Section>
          <Section $h={27} $center>
            <ForecastTabs><FinTab $on>预测评级</FinTab><FinTab>主题投资</FinTab><FinTab>选股策略</FinTab></ForecastTabs>
          </Section>
          <LastSection $h={81} $pt={4}>
            <ForeRow><FLbl>年份</FLbl><FLbl as="span" style={{ textAlign: "center" }}>预测收益</FLbl><FLbl as="span" style={{ textAlign: "right" }}>预测PE</FLbl></ForeRow>
            <ForeRow><span>2019</span></ForeRow>
            <ForeRow><span>2020</span></ForeRow>
            <ForeRow><span>2021</span></ForeRow>
          </LastSection>
        </Fin>

        <Rail>
          {RailIcons.map((ic, i) => <RailCell key={i}>{ic}</RailCell>)}
          <RailSep />
          {RailIcons2.map((ic, i) => <RailCell key={i}>{ic}</RailCell>)}
          <RailSep />
          {RailIcons3.map((ic, i) => <RailCell key={i}>{ic}</RailCell>)}
          <RailCell $on $big>日</RailCell>
          {RailLetters.map((l) => <RailCell key={l} $big>{l}</RailCell>)}
        </Rail>
      </Body>
      <FootBar />
      <Watermark>
        <WmTop><WmBrand>股海网</WmBrand><WmSlogan>股票软件资源分享</WmSlogan></WmTop>
        <WmUrl>Www.Guhai.com.cn</WmUrl>
      </Watermark>
    </Page>
  );
}
